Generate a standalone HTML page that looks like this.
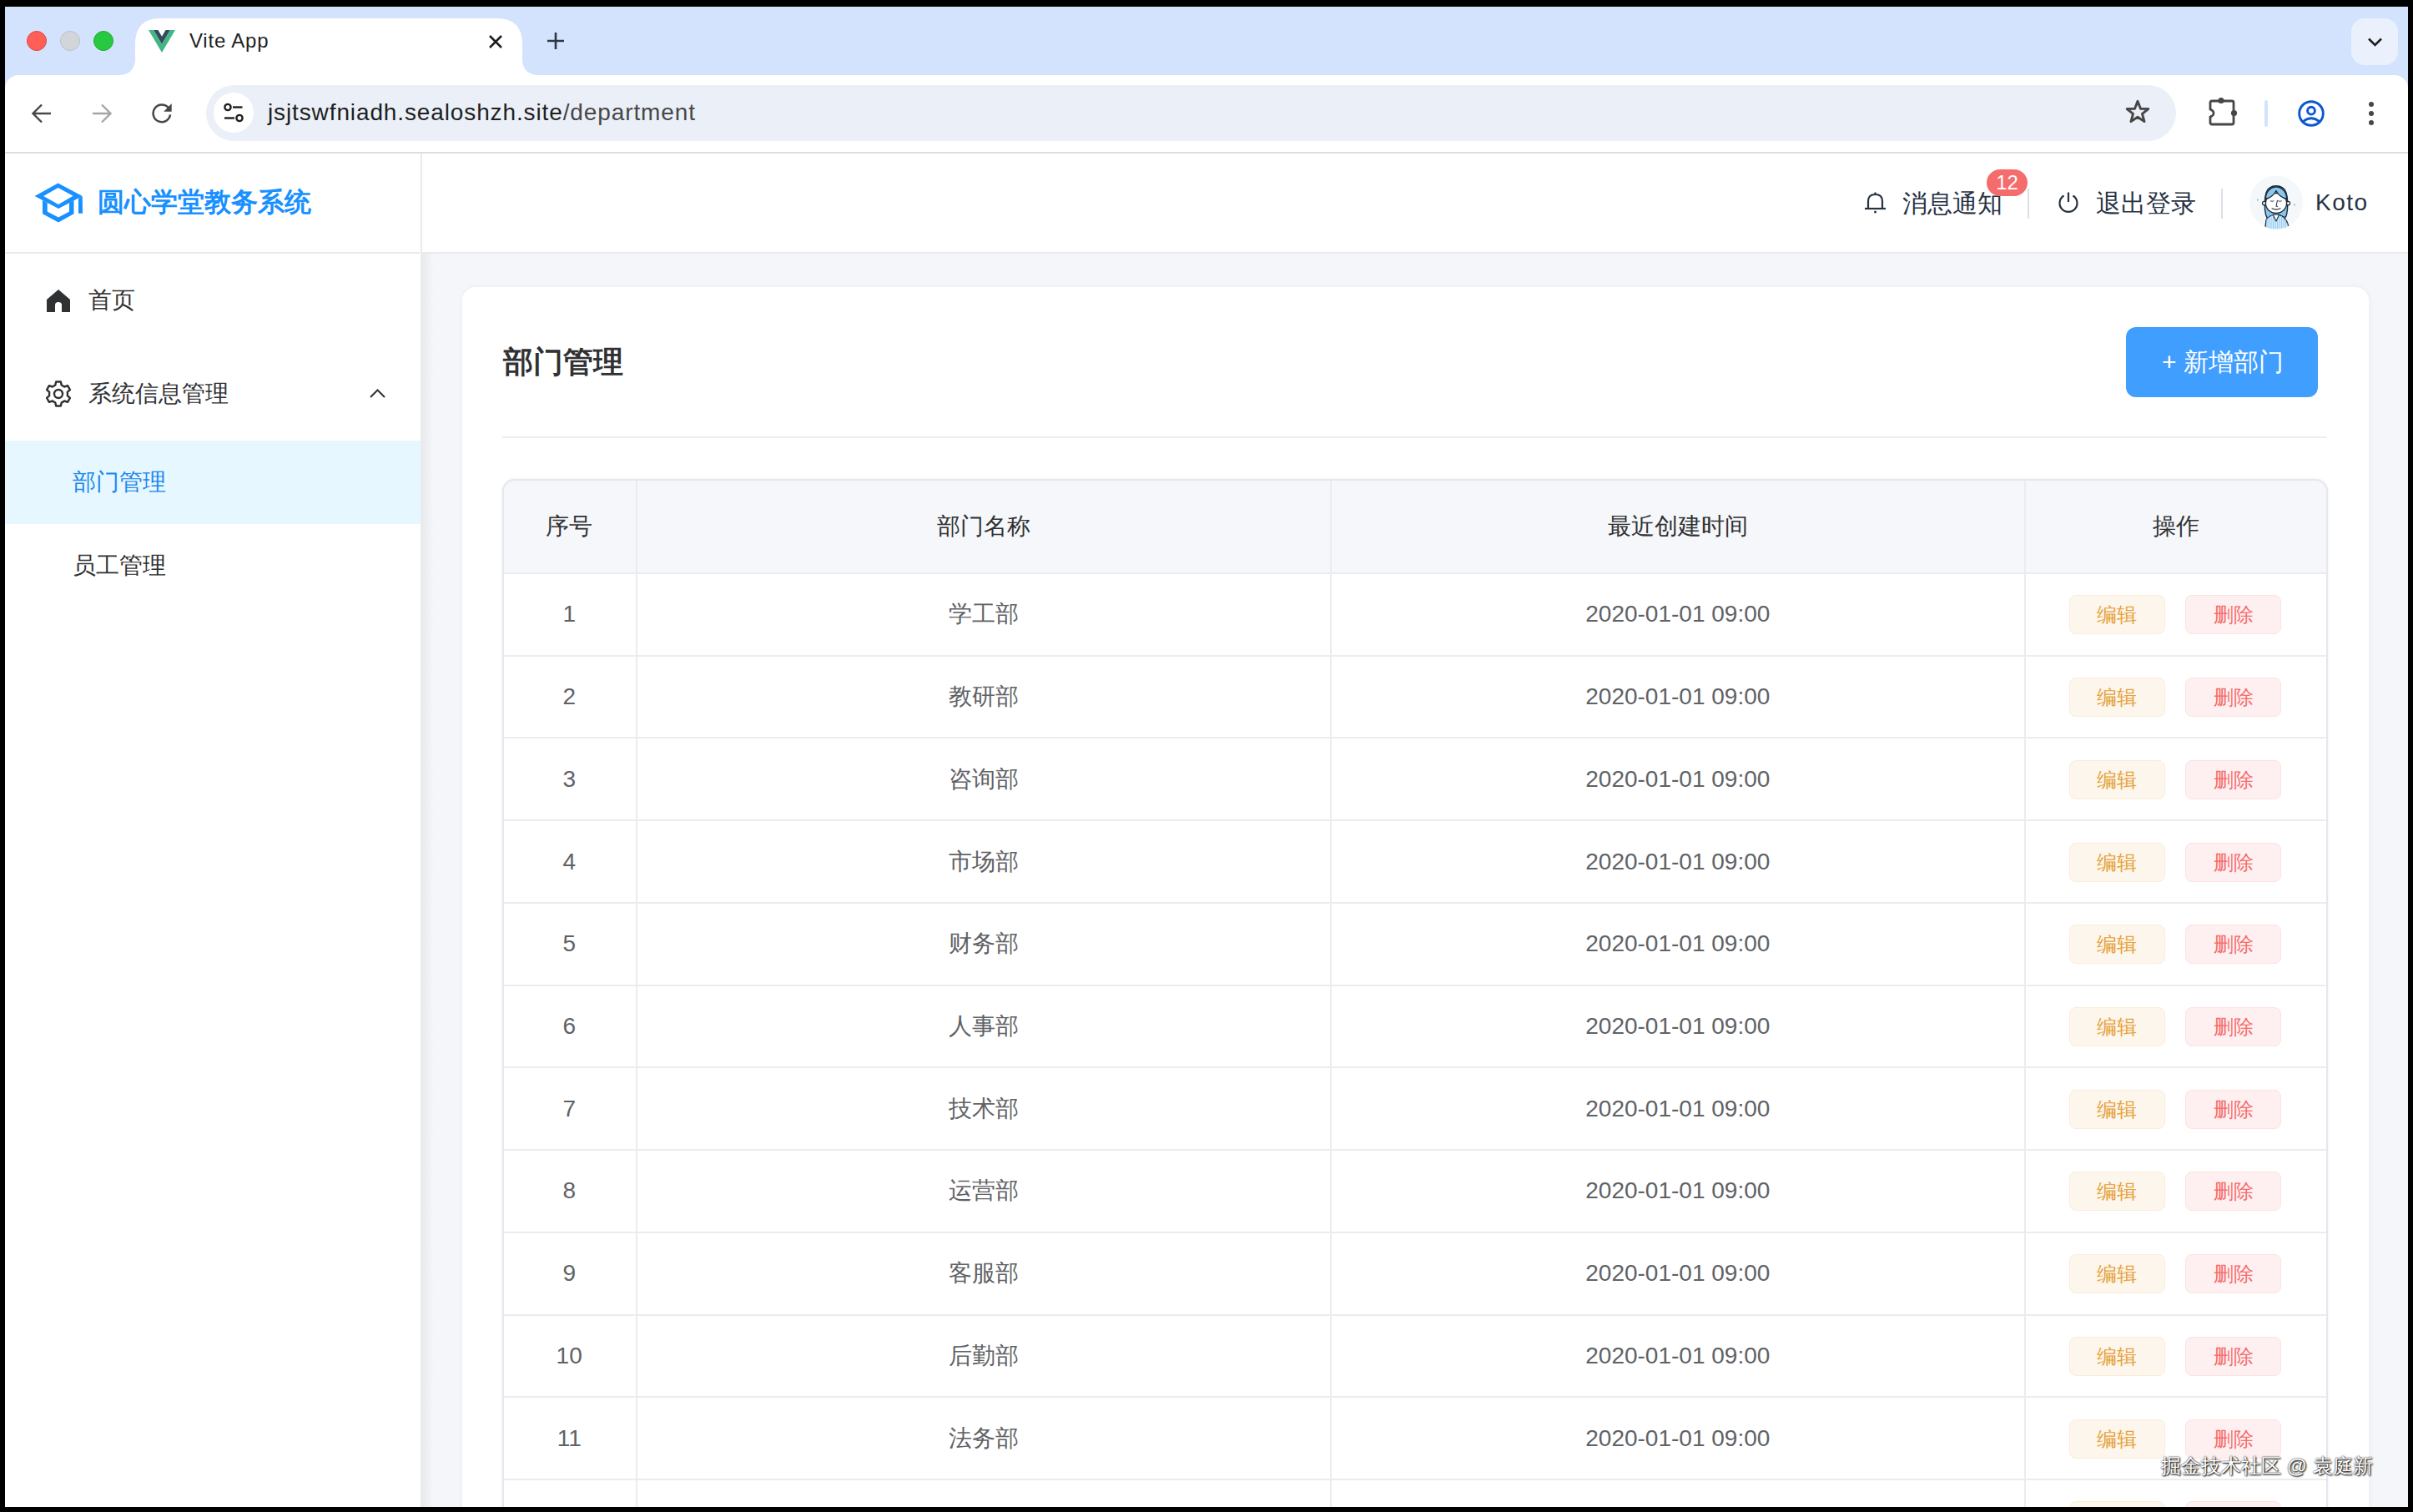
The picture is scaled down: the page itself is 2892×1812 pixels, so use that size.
<!DOCTYPE html>
<html><head><meta charset="utf-8">
<style>
*{box-sizing:border-box;margin:0;padding:0}
html,body{width:2892px;height:1812px;overflow:hidden;background:#000;font-family:"Liberation Sans",sans-serif}
.abs{position:absolute}
.t{position:absolute;white-space:nowrap;line-height:40px}
#win{position:absolute;left:6px;top:8px;width:2880px;height:1798px;background:#fff;overflow:hidden}
#tabstrip{position:absolute;left:0;top:0;width:2880px;height:110px;background:#D3E3FD}
.tl{position:absolute;width:24px;height:24px;border-radius:50%;top:29px}
#toolbar{position:absolute;left:0;top:82px;width:2880px;height:94px;background:#fff;border-bottom:2px solid #DCDEE1;border-radius:16px 16px 0 0}
#omni{position:absolute;left:241px;top:12px;width:2361px;height:67px;border-radius:34px;background:#EBF0F8}
#url{position:absolute;left:315px;top:17px;font-size:28px;color:#1F1F1F;line-height:56px;white-space:nowrap;letter-spacing:0.88px}
#sidebar{position:absolute;left:0;top:175px;width:498px;height:1623px;background:#fff;border-right:2px solid #E6E8EB}
#header{position:absolute;left:498px;top:175px;width:2382px;height:120px;background:#fff;border-bottom:2px solid #E6E8EB}
#main{position:absolute;left:498px;top:295px;width:2382px;height:1503px;background:#F4F5F7}
#card{position:absolute;left:49px;top:48px;width:2284px;height:1600px;background:#fff;border-radius:16px}
.menu{position:absolute;font-size:28px;color:#303133;white-space:nowrap;line-height:40px}
#table{position:absolute;left:49px;top:231px;width:2186px;height:1400px;border:2px solid #E6E8F2;border-radius:12px;overflow:hidden;background:#fff}
.th{position:absolute;top:0;height:112px;background:#F5F7FA;border-bottom:2px solid #EBEEF5}
.cell{position:absolute;font-size:28px;white-space:nowrap;text-align:center;line-height:40px}
.vline{position:absolute;top:0;width:2px;height:1400px;background:#EBEEF5}
.hline{position:absolute;left:0;width:2186px;height:2px;background:#EBEEF5}
.tag{position:absolute;width:115px;height:47px;border-radius:8px;font-size:24px;line-height:45px;text-align:center}
.edit{background:#FDF6EC;border:1px solid #FAECD8;color:#E6A23C}
.del{background:#FEF0F0;border:1px solid #FDE2E2;color:#F56C6C}
</style></head>
<body>
<div id="win">
  <div id="tabstrip">
    <div class="tl" style="left:26px;background:#FF5F57;border:1px solid #E0443E"></div>
    <div class="tl" style="left:66px;background:#D2D5DA;border:1px solid #BDC1C7"></div>
    <div class="tl" style="left:106px;background:#28C840;border:1px solid #1DAD2B"></div>
    <!-- active tab -->
    <svg class="abs" style="left:136px;top:13px" width="510" height="70" viewBox="0 0 510 70">
      <path d="M0 69 Q18 69 20 52 L20 32 Q20 1 50 1 L454 1 Q484 1 484 32 L484 52 Q486 69 504 69 L504 70 L0 70 Z" fill="#fff"/>
    </svg>
    <svg class="abs" style="left:172px;top:28px" width="32" height="27" viewBox="0 0 32 27">
      <path d="M0 0 L6.2 0 L16 16.8 L25.8 0 L32 0 L16 27 Z" fill="#41B883"/>
      <path d="M6.2 0 L11.5 0 L16 7.8 L20.5 0 L25.8 0 L16 16.8 Z" fill="#35495E"/>
    </svg>
    <div class="abs" style="left:221px;top:26px;font-size:24px;color:#1F1F1F;line-height:30px;letter-spacing:0.8px">Vite App</div>
    <svg class="abs" style="left:580px;top:34px" width="16" height="16" viewBox="0 0 16 16"><path d="M1 1 L15 15 M15 1 L1 15" stroke="#1F1F1F" stroke-width="2.6"/></svg>
    <svg class="abs" style="left:650px;top:30.5px" width="20" height="20" viewBox="0 0 20 20"><path d="M10 0 V20 M0 10 H20" stroke="#2E3645" stroke-width="2.6"/></svg>
    <div class="abs" style="left:2812px;top:14px;width:56px;height:56px;border-radius:16px;background:#EAF1FD"></div>
    <svg class="abs" style="left:2832px;top:37px" width="17" height="11" viewBox="0 0 17 11"><path d="M1 1.5 L8.5 9 L16 1.5" stroke="#1F1F1F" stroke-width="2.6" fill="none"/></svg>
  </div>
  <div id="toolbar">
    <!-- back -->
    <svg class="abs" style="left:32px;top:34px" width="24" height="24" viewBox="0 0 24 24"><path d="M23 12 H2 M12 1.5 L1.5 12 L12 22.5" stroke="#474747" stroke-width="2.4" fill="none"/></svg>
    <svg class="abs" style="left:104px;top:34px" width="24" height="24" viewBox="0 0 24 24"><path d="M1 12 H22 M12 1.5 L22.5 12 L12 22.5" stroke="#A6A6A6" stroke-width="2.4" fill="none"/></svg>
    <svg class="abs" style="left:176px;top:34px" width="24" height="24" viewBox="0 0 24 24"><path d="M22.1 13.4 A10.3 10.3 0 1 1 19.8 5.3" stroke="#474747" stroke-width="2.5" fill="none"/><path d="M23.7 0.1 V9.8 H14.2 Z" fill="#474747"/></svg>
    <div id="omni">
      <div class="abs" style="left:9px;top:9px;width:48px;height:48px;border-radius:50%;background:#fff"></div>
      <svg class="abs" style="left:21px;top:21px" width="25" height="25" viewBox="0 0 25 25">
        <circle cx="5" cy="5.5" r="3.6" stroke="#1F1F1F" stroke-width="2.4" fill="none"/><path d="M11 5.5 H22.5" stroke="#1F1F1F" stroke-width="2.4"/>
        <circle cx="19" cy="18.5" r="3.6" stroke="#1F1F1F" stroke-width="2.4" fill="none"/><path d="M1 18.5 H13" stroke="#1F1F1F" stroke-width="2.4"/>
      </svg>
      <div id="url" style="left:74px;top:5px">jsjtswfniadh.sealoshzh.site<span style="color:#474747">/department</span></div>
      <svg class="abs" style="left:2299px;top:16px" width="32" height="32" viewBox="0 0 24 24"><path d="M12 2.5 L14.6 9.2 L21.6 9.4 L16.1 13.8 L18 20.7 L12 16.7 L6 20.7 L7.9 13.8 L2.4 9.4 L9.4 9.2 Z" stroke="#474747" stroke-width="2.2" fill="none" stroke-linejoin="round"/></svg>
    </div>
    <!-- extensions -->
    <svg class="abs" style="left:2636px;top:24px" width="50" height="40" viewBox="0 0 50 40">
      <path d="M9 7 H33 Q35 7 35 9 V33 Q35 35 33 35 H9 Q7 35 7 33 V9 Q7 7 9 7 Z" stroke="#474747" stroke-width="2.8" fill="none"/>
      <circle cx="20" cy="6.5" r="3.6" fill="#474747"/>
      <circle cx="35.5" cy="21.5" r="3.6" fill="#474747"/>
      <circle cx="6.5" cy="21.5" r="3.6" fill="#fff"/>
      <path d="M7 17.5 A4 4 0 0 1 7 25.5" stroke="#474747" stroke-width="2.8" fill="none"/>
    </svg>
    <div class="abs" style="left:2708px;top:30px;width:4px;height:32px;background:#D3E3FD;border-radius:2px"></div>
    <svg class="abs" style="left:2747px;top:29px" width="34" height="34" viewBox="0 0 34 34"><circle cx="17" cy="17" r="14.3" stroke="#0B57D0" stroke-width="2.9" fill="none"/><circle cx="17" cy="13.7" r="4.4" stroke="#0B57D0" stroke-width="2.9" fill="none"/><path d="M7.6 26.3 Q17 19.2 26.4 26.3" stroke="#0B57D0" stroke-width="2.9" fill="none"/></svg>
    <div class="abs" style="left:2833px;top:31.7px;width:6px;height:6px;border-radius:50%;background:#474747"></div>
    <div class="abs" style="left:2833px;top:43px;width:6px;height:6px;border-radius:50%;background:#474747"></div>
    <div class="abs" style="left:2833px;top:54.3px;width:6px;height:6px;border-radius:50%;background:#474747"></div>
  </div>
    <!-- sidebar -->
  <div class="abs" style="left:0;top:176px;width:500px;height:1622px;background:#fff;border-right:2px solid #E8EAED"></div>
  <div class="abs" style="left:0;top:294px;width:497px;height:2px;background:#E8EAED"></div>
  <!-- header -->
  <div class="abs" style="left:500px;top:176px;width:2380px;height:120px;background:#fff;border-bottom:2px solid #E8EAED"></div>
  <!-- main bg -->
  <div class="abs" style="left:500px;top:296px;width:2380px;height:1502px;background:#F5F6F9"></div>
  <div class="abs" style="left:500px;top:296px;width:14px;height:1502px;background:linear-gradient(to right,#E9EAED,rgba(245,246,249,0))"></div>
  <!-- logo -->
  <svg class="abs" style="left:24px;top:202px" width="130" height="70" viewBox="0 0 130 70">
    <path fill="#1890FF" fill-rule="evenodd" d="M11.6 25 L39.6 9.4 L68.7 25 L40.1 40 Z M22.1 25 L39.6 15 L57.6 24.8 L40 35 Z"/>
    <path fill="#1890FF" d="M21 30 L21 46.3 L40 56.6 L58.5 46.3 L58.5 30.2 L53 33.1 L53 43.6 L40 50.6 L26.7 43.6 L26.7 33 Z"/>
    <path fill="#1890FF" d="M68.7 25 L69 45.8 L64 45.8 L64 27.6 Z"/>
  </svg>
  <div class="t" style="left:111px;top:213.5px;font-size:32px;color:#1890FF;font-weight:bold">圆心学堂教务系统</div>
  <!-- menu -->
  <svg class="abs" style="left:49.6px;top:338.7px" width="28" height="27" viewBox="0 0 28 27"><path d="M14 0 L28 12 L28 27 L18 27 L18 18.5 Q18 15 14 15 Q10 15 10 18.5 L10 27 L0 27 L0 12 Z" fill="#303133"/></svg>
  <div class="t" style="left:99.6px;top:332.2px;font-size:28px;color:#303133">首页</div>
  <svg class="abs" style="left:48px;top:448px" width="32" height="32" viewBox="0 0 32 32"><path d="M13.2 1.5 H18.8 L19.8 5.6 Q21.6 6.3 23.1 7.5 L27.1 6.2 L29.9 11.1 L26.8 13.9 Q27.1 16 26.8 18.1 L29.9 20.9 L27.1 25.8 L23.1 24.5 Q21.6 25.7 19.8 26.4 L18.8 30.5 H13.2 L12.2 26.4 Q10.4 25.7 8.9 24.5 L4.9 25.8 L2.1 20.9 L5.2 18.1 Q4.9 16 5.2 13.9 L2.1 11.1 L4.9 6.2 L8.9 7.5 Q10.4 6.3 12.2 5.6 Z" fill="none" stroke="#303133" stroke-width="2.4" stroke-linejoin="round"/><circle cx="16" cy="16" r="5" fill="none" stroke="#303133" stroke-width="2.4"/></svg>
  <div class="t" style="left:99.6px;top:444px;font-size:28px;color:#303133">系统信息管理</div>
  <svg class="abs" style="left:437px;top:458px" width="19" height="11" viewBox="0 0 19 11"><path d="M1 10 L9.5 1.5 L18 10" fill="none" stroke="#303133" stroke-width="2"/></svg>
  <div class="abs" style="left:0;top:520px;width:498px;height:100px;background:#E6F7FF"></div>
  <div class="t" style="left:81.3px;top:549.9px;font-size:28px;color:#2088EC">部门管理</div>
  <div class="t" style="left:81.3px;top:649.7px;font-size:28px;color:#303133">员工管理</div>
  <!-- header right -->
  <svg class="abs" style="left:2227.8px;top:222px" width="27" height="26" viewBox="0 0 27 26"><path d="M5 19.5 V11 Q5 3 13.5 3 Q22 3 22 11 V19.5" fill="none" stroke="#273244" stroke-width="2.2"/><path d="M1 20 H26" stroke="#273244" stroke-width="2.2"/><path d="M13.5 0.5 V3" stroke="#273244" stroke-width="2.2"/><circle cx="13.5" cy="24" r="1.5" fill="#273244"/></svg>
  <div class="t" style="left:2273.7px;top:216px;font-size:30px;color:#273244">消息通知</div>
  <div class="abs" style="left:2375px;top:195px;width:49px;height:31.5px;border-radius:16px;background:#F56C6C;color:#fff;font-size:24px;line-height:31.5px;text-align:center">12</div>
  <div class="abs" style="left:2424px;top:218px;width:2px;height:36px;background:#DCDFE6"></div>
  <svg class="abs" style="left:2460px;top:222px" width="26" height="26" viewBox="0 0 26 26"><path d="M7.5 4.5 A10.5 10.5 0 1 0 18.5 4.5" fill="none" stroke="#273244" stroke-width="2.2"/><path d="M13 0.5 V12" stroke="#273244" stroke-width="2.2"/></svg>
  <div class="t" style="left:2506px;top:216px;font-size:30px;color:#273244">退出登录</div>
  <div class="abs" style="left:2655.6px;top:218px;width:2px;height:36px;background:#DCDFE6"></div>
  <svg class="abs" style="left:2684px;top:192px" width="80" height="80" viewBox="0 0 80 80">
    <defs><clipPath id="avc"><circle cx="38" cy="42.6" r="32"/></clipPath>
    <clipPath id="shc"><path d="M26 63.5 C28 60 31 58.5 34.4 57.5 L38 65 L41.3 57.5 C46 58.5 50.5 62 52.9 71 L54 80 L24 80 Z"/></clipPath></defs>
    <circle cx="38" cy="42.6" r="32" fill="#F5F8FB"/>
    <g clip-path="url(#avc)" stroke="#1B2B38" stroke-linejoin="round" stroke-linecap="round">
      <path d="M25.5 57 C23.5 48 24 37 26 31 C28 25.5 33 22.8 38 22.8 C43 22.8 48 25.5 50 31 C52 37 52.5 48 50.5 57 L49.5 60 L27 61 Z" fill="#8CC6EE" stroke-width="1.4"/>
      <path d="M26 63.5 C28 60 31 58.5 34.4 57.5 L38 65 L41.3 57.5 C46 58.5 50.5 62 52.9 71 L54 80 L24 80 Z" fill="#D4EBFB" stroke-width="1.3"/>
      <g clip-path="url(#shc)" stroke="#8CC6EE" stroke-width="0.9"><path d="M27 58V80M29.5 58V80M32 58V80M34.5 58V80M37 58V80M39.5 58V80M42 58V80M44.5 58V80M47 58V80M49.5 58V80M52 58V80"/></g>
      <path d="M34.4 57.5 L38 65 L41.3 57.5 Z" fill="#fff" stroke-width="1"/>
      <circle cx="23.8" cy="43.6" r="2.3" fill="#fff" stroke-width="1.2"/>
      <circle cx="52.3" cy="43.6" r="2.3" fill="#fff" stroke-width="1.2"/>
      <ellipse cx="38" cy="43.5" rx="12.6" ry="12" fill="#fff" stroke-width="1.4"/>
      <path d="M25.4 38.5 C31 37 35.5 34 38 28.5 C40.5 34 45 37 50.6 38.5 C50.5 30 45 24 38 24 C31 24 25.5 30 25.4 38.5 Z" fill="#8CC6EE" stroke-width="1.3"/>
      <path d="M31.3 40.9 Q33.2 41.9 35 40.9 M40.7 40.9 Q42.5 41.9 44.4 40.9" fill="none" stroke-width="0.9"/>
      <path d="M39.4 40.3 L38 47.3 L39.6 47.3" fill="none" stroke-width="1"/>
      <path d="M33 49.8 Q38 52.6 43 49.8" fill="none" stroke-width="1.2"/>
    </g>
    <circle cx="15.8" cy="39.7" r="0.9" fill="#7FA8A0"/><circle cx="60" cy="45.5" r="0.9" fill="#7FA8A0"/>
  </svg>
  <div class="t" style="left:2769px;top:215px;font-size:28px;color:#273244;letter-spacing:1.5px">Koto</div>
  <!-- card -->
  <div class="abs" style="left:547.6px;top:335.6px;width:2285px;height:1500px;background:#fff;border-radius:16px;box-shadow:0 0 6px rgba(60,70,90,0.06)"></div>
  <div class="t" style="left:597.3px;top:406.4px;font-size:36px;color:#303133;font-weight:bold">部门管理</div>
  <div class="abs" style="left:2542px;top:384px;width:230px;height:84px;border-radius:12px;background:#409EFF"></div>
  <div class="t" style="left:2585px;top:406.3px;font-size:30px;color:#fff">+ 新增部门</div>
  <div class="abs" style="left:596px;top:515.4px;width:2187px;height:2px;background:#EBEEF5"></div>
<div class="abs" style="left:595.5px;top:565.7px;width:2188.0px;height:113.29999999999995px;background:#F5F7FA;border-radius:15px 15px 0 0"></div>
<div class="t" style="left:476.2px;width:400px;text-align:center;top:603.2px;font-size:28px;color:#303133;font-weight:normal;">序号</div>
<div class="t" style="left:972.8px;width:400px;text-align:center;top:603.2px;font-size:28px;color:#303133;font-weight:normal;">部门名称</div>
<div class="t" style="left:1804.8px;width:400px;text-align:center;top:603.2px;font-size:28px;color:#303133;font-weight:normal;">最近创建时间</div>
<div class="t" style="left:2402.2px;width:400px;text-align:center;top:603.2px;font-size:28px;color:#303133;font-weight:normal;">操作</div>
<div class="abs" style="left:595.5px;top:678px;width:2188.0px;height:2px;background:#EBECEF"></div>
<div class="abs" style="left:595.5px;top:776.7px;width:2188.0px;height:2px;background:#EBECEF"></div>
<div class="abs" style="left:595.5px;top:875.4px;width:2188.0px;height:2px;background:#EBECEF"></div>
<div class="abs" style="left:595.5px;top:974.2px;width:2188.0px;height:2px;background:#EBECEF"></div>
<div class="abs" style="left:595.5px;top:1072.9px;width:2188.0px;height:2px;background:#EBECEF"></div>
<div class="abs" style="left:595.5px;top:1171.6px;width:2188.0px;height:2px;background:#EBECEF"></div>
<div class="abs" style="left:595.5px;top:1270.3px;width:2188.0px;height:2px;background:#EBECEF"></div>
<div class="abs" style="left:595.5px;top:1369.0px;width:2188.0px;height:2px;background:#EBECEF"></div>
<div class="abs" style="left:595.5px;top:1467.8px;width:2188.0px;height:2px;background:#EBECEF"></div>
<div class="abs" style="left:595.5px;top:1566.5px;width:2188.0px;height:2px;background:#EBECEF"></div>
<div class="abs" style="left:595.5px;top:1665.2px;width:2188.0px;height:2px;background:#EBECEF"></div>
<div class="abs" style="left:595.5px;top:1763.9px;width:2188.0px;height:2px;background:#EBECEF"></div>
<div class="abs" style="left:756px;top:565.7px;width:2px;height:1232.3px;background:#EBECEF"></div>
<div class="abs" style="left:1587.5px;top:565.7px;width:2px;height:1232.3px;background:#EBECEF"></div>
<div class="abs" style="left:2420px;top:565.7px;width:2px;height:1232.3px;background:#EBECEF"></div>
<div class="t" style="left:601.2px;width:150px;text-align:center;top:708.4px;font-size:28px;color:#606266;font-weight:normal;">1</div>
<div class="t" style="left:972.8px;width:400px;text-align:center;top:708.4px;font-size:28px;color:#606266;font-weight:normal;">学工部</div>
<div class="t" style="left:1804.8px;width:400px;text-align:center;top:708.4px;font-size:28px;color:#606266;font-weight:normal;">2020-01-01 09:00</div>
<div class="tag edit" style="left:2473.5px;top:705.4px">编辑</div>
<div class="tag del" style="left:2613.2px;top:705.4px">删除</div>
<div class="t" style="left:601.2px;width:150px;text-align:center;top:807.1px;font-size:28px;color:#606266;font-weight:normal;">2</div>
<div class="t" style="left:972.8px;width:400px;text-align:center;top:807.1px;font-size:28px;color:#606266;font-weight:normal;">教研部</div>
<div class="t" style="left:1804.8px;width:400px;text-align:center;top:807.1px;font-size:28px;color:#606266;font-weight:normal;">2020-01-01 09:00</div>
<div class="tag edit" style="left:2473.5px;top:804.1px">编辑</div>
<div class="tag del" style="left:2613.2px;top:804.1px">删除</div>
<div class="t" style="left:601.2px;width:150px;text-align:center;top:905.8px;font-size:28px;color:#606266;font-weight:normal;">3</div>
<div class="t" style="left:972.8px;width:400px;text-align:center;top:905.8px;font-size:28px;color:#606266;font-weight:normal;">咨询部</div>
<div class="t" style="left:1804.8px;width:400px;text-align:center;top:905.8px;font-size:28px;color:#606266;font-weight:normal;">2020-01-01 09:00</div>
<div class="tag edit" style="left:2473.5px;top:902.8px">编辑</div>
<div class="tag del" style="left:2613.2px;top:902.8px">删除</div>
<div class="t" style="left:601.2px;width:150px;text-align:center;top:1004.5px;font-size:28px;color:#606266;font-weight:normal;">4</div>
<div class="t" style="left:972.8px;width:400px;text-align:center;top:1004.5px;font-size:28px;color:#606266;font-weight:normal;">市场部</div>
<div class="t" style="left:1804.8px;width:400px;text-align:center;top:1004.5px;font-size:28px;color:#606266;font-weight:normal;">2020-01-01 09:00</div>
<div class="tag edit" style="left:2473.5px;top:1001.6px">编辑</div>
<div class="tag del" style="left:2613.2px;top:1001.6px">删除</div>
<div class="t" style="left:601.2px;width:150px;text-align:center;top:1103.2px;font-size:28px;color:#606266;font-weight:normal;">5</div>
<div class="t" style="left:972.8px;width:400px;text-align:center;top:1103.2px;font-size:28px;color:#606266;font-weight:normal;">财务部</div>
<div class="t" style="left:1804.8px;width:400px;text-align:center;top:1103.2px;font-size:28px;color:#606266;font-weight:normal;">2020-01-01 09:00</div>
<div class="tag edit" style="left:2473.5px;top:1100.3px">编辑</div>
<div class="tag del" style="left:2613.2px;top:1100.3px">删除</div>
<div class="t" style="left:601.2px;width:150px;text-align:center;top:1202.0px;font-size:28px;color:#606266;font-weight:normal;">6</div>
<div class="t" style="left:972.8px;width:400px;text-align:center;top:1202.0px;font-size:28px;color:#606266;font-weight:normal;">人事部</div>
<div class="t" style="left:1804.8px;width:400px;text-align:center;top:1202.0px;font-size:28px;color:#606266;font-weight:normal;">2020-01-01 09:00</div>
<div class="tag edit" style="left:2473.5px;top:1199.0px">编辑</div>
<div class="tag del" style="left:2613.2px;top:1199.0px">删除</div>
<div class="t" style="left:601.2px;width:150px;text-align:center;top:1300.7px;font-size:28px;color:#606266;font-weight:normal;">7</div>
<div class="t" style="left:972.8px;width:400px;text-align:center;top:1300.7px;font-size:28px;color:#606266;font-weight:normal;">技术部</div>
<div class="t" style="left:1804.8px;width:400px;text-align:center;top:1300.7px;font-size:28px;color:#606266;font-weight:normal;">2020-01-01 09:00</div>
<div class="tag edit" style="left:2473.5px;top:1297.7px">编辑</div>
<div class="tag del" style="left:2613.2px;top:1297.7px">删除</div>
<div class="t" style="left:601.2px;width:150px;text-align:center;top:1399.4px;font-size:28px;color:#606266;font-weight:normal;">8</div>
<div class="t" style="left:972.8px;width:400px;text-align:center;top:1399.4px;font-size:28px;color:#606266;font-weight:normal;">运营部</div>
<div class="t" style="left:1804.8px;width:400px;text-align:center;top:1399.4px;font-size:28px;color:#606266;font-weight:normal;">2020-01-01 09:00</div>
<div class="tag edit" style="left:2473.5px;top:1396.4px">编辑</div>
<div class="tag del" style="left:2613.2px;top:1396.4px">删除</div>
<div class="t" style="left:601.2px;width:150px;text-align:center;top:1498.1px;font-size:28px;color:#606266;font-weight:normal;">9</div>
<div class="t" style="left:972.8px;width:400px;text-align:center;top:1498.1px;font-size:28px;color:#606266;font-weight:normal;">客服部</div>
<div class="t" style="left:1804.8px;width:400px;text-align:center;top:1498.1px;font-size:28px;color:#606266;font-weight:normal;">2020-01-01 09:00</div>
<div class="tag edit" style="left:2473.5px;top:1495.2px">编辑</div>
<div class="tag del" style="left:2613.2px;top:1495.2px">删除</div>
<div class="t" style="left:601.2px;width:150px;text-align:center;top:1596.8px;font-size:28px;color:#606266;font-weight:normal;">10</div>
<div class="t" style="left:972.8px;width:400px;text-align:center;top:1596.8px;font-size:28px;color:#606266;font-weight:normal;">后勤部</div>
<div class="t" style="left:1804.8px;width:400px;text-align:center;top:1596.8px;font-size:28px;color:#606266;font-weight:normal;">2020-01-01 09:00</div>
<div class="tag edit" style="left:2473.5px;top:1593.9px">编辑</div>
<div class="tag del" style="left:2613.2px;top:1593.9px">删除</div>
<div class="t" style="left:601.2px;width:150px;text-align:center;top:1695.6px;font-size:28px;color:#606266;font-weight:normal;">11</div>
<div class="t" style="left:972.8px;width:400px;text-align:center;top:1695.6px;font-size:28px;color:#606266;font-weight:normal;">法务部</div>
<div class="t" style="left:1804.8px;width:400px;text-align:center;top:1695.6px;font-size:28px;color:#606266;font-weight:normal;">2020-01-01 09:00</div>
<div class="tag edit" style="left:2473.5px;top:1692.6px">编辑</div>
<div class="tag del" style="left:2613.2px;top:1692.6px">删除</div>
<div class="t" style="left:601.2px;width:150px;text-align:center;top:1794.3px;font-size:28px;color:#606266;font-weight:normal;">12</div>
<div class="t" style="left:972.8px;width:400px;text-align:center;top:1794.3px;font-size:28px;color:#606266;font-weight:normal;">宣传部</div>
<div class="t" style="left:1804.8px;width:400px;text-align:center;top:1794.3px;font-size:28px;color:#606266;font-weight:normal;">2020-01-01 09:00</div>
<div class="tag edit" style="left:2473.5px;top:1791.3px">编辑</div>
<div class="tag del" style="left:2613.2px;top:1791.3px">删除</div>
<div class="abs" style="left:595.5px;top:565.7px;width:2188.0px;height:1400px;border:2px solid #E6E7EF;border-radius:15px;box-shadow:0 0 3px rgba(40,50,100,0.10)"></div>
  <div class="t" style="left:2584px;top:1729px;font-size:24px;color:#fff;text-shadow:0 0 2px #000,1px 1px 2px #000">掘金技术社区 @ 袁庭新</div>

</div>
</body></html>
